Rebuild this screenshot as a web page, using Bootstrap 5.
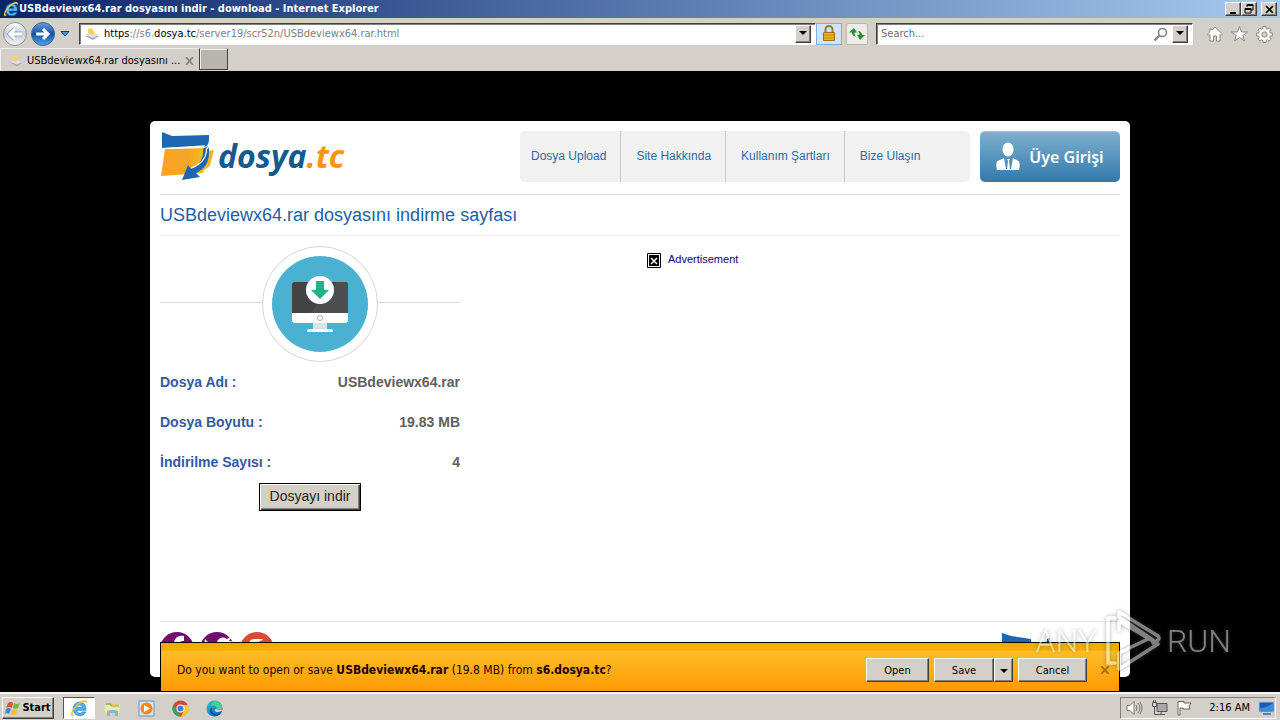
<!DOCTYPE html>
<html lang="tr">
<head>
<meta charset="utf-8">
<meta name="viewport" content="width=device-width, initial-scale=1">
<title>USBdeviewx64.rar dosyasını indir - download</title>
<link href="https://cdn.jsdelivr.net/npm/bootstrap@5.3.0/dist/css/bootstrap.min.css" rel="stylesheet">
<style>
:root{--face:#d4d0c8;--chrome:#d4cfc9}
body{font-family:"DejaVu Sans Condensed","DejaVu Sans",sans-serif;font-size:11px;line-height:14px;color:#000;background:#000}
svg{display:block;flex:none}
a{text-decoration:none}
.titlebar{height:18px;background:linear-gradient(90deg,#0a246a,#a6caf0);color:#fff;font-weight:700;padding:0 3px}
.bevel{background:var(--face);border:1px solid;border-color:#fff #404040 #404040 #fff;box-shadow:inset -1px -1px #808080;border-radius:0;padding:0;color:#000;display:flex;align-items:center;justify-content:center}
.winbtn{width:16px;height:14px}
.toolbar-row{height:30px;padding:1px 0 0 3px;background:var(--chrome)}
.field{height:22px;background:#fff;border:1px solid;border-color:#404040 #fff #fff #404040;box-shadow:inset 1px 1px #808080}
.field input{border:0;outline:0;background:transparent;min-width:0;font-size:11px;padding:0;color:#6d6d6d}
.field input::placeholder{color:#6d6d6d;opacity:1}
.field a{color:#808080;line-height:16px}
.arrowbtn{width:16px;height:18px}
.search-field{width:317px}
.lockbtn{width:26px;height:22px;background:#cfe3fb;border:1px solid #7eaee8;padding:0}
.refresh{width:22px;height:22px;background:#eeece9;border:1px solid #bbb7b0;border-radius:2px;padding:0}
.toolbar-icons{margin:0 7px 0 14px}
.tabs-row{height:23px;background:var(--chrome)}
.page-tab{width:199px;border-top:1px solid #eee;border-left:1px solid #eee;padding-top:2px}
.newtab{width:29px;background:#bab4ae;border:1px solid #404040;border-top-color:#d4cfc9;box-shadow:inset 1px 1px #eee;height:22px}
.plain{border:0;background:none;padding:0}
.viewport-area{background:#000}
.sheet{max-width:980px;height:556px;margin-top:50px;border-radius:5px;background:#fff;font-family:"Liberation Sans",Arial,sans-serif;padding:10px 10px 0}
.sheet-head{height:64px;flex:none;border-bottom:1px solid #d9d9d9}
.brand{font:italic 700 32px/50px "Open Sans",sans-serif;color:#155a8f}
.brand span{color:#ff9410}
.menu{width:450px;height:51px;margin-right:10px;background:#f1f1f1;border-radius:5px;font-size:12px}
.menu a{color:#2a6ca8;padding:0 14px 0 15px;line-height:50px;border-right:1px solid #c9c9c9;white-space:nowrap}
.menu a:first-child{padding-left:11px}
.menu a:last-child{border:0}
.member{width:140px;height:51px;border:0;border-radius:5px;background:linear-gradient(#7db0cf,#3379ac);border-top:1px solid #94c8d8;color:#fff;font:600 16px/22px "Noto Sans",sans-serif;padding:0}
.heading{flex:none;font-size:18px;line-height:20px;height:41px;color:#205fa5;border-bottom:1px solid #eee;padding-top:10px;margin:0}
.info{width:300px}
.info table{font-size:14px;font-weight:700}
.info th{color:#2f5aa3;height:40px;padding:0}
.info td{color:#606060;text-align:right;padding:0}
.getfile{display:block;height:28px;margin:1px auto 0;border:1px solid #000;background:var(--face);box-shadow:inset 1px 1px #fff,inset -1px -1px #404040,inset -2px -2px #808080;font-size:14px;color:#222;padding:0 10px 2px}
.ad{padding:17px 0 0 187px;font-size:11px;line-height:12px}
.ad a{color:#100078;gap:7px}
.sheet-foot{flex:none;gap:6px;border-top:1px solid #e8e8e8;height:56px;padding-top:10px}
.foot-brand{margin-right:70px}
.savebar{bottom:0;left:0;right:0;margin:0 auto;max-width:960px;height:50px;border:1px solid #000;background:linear-gradient(#f0aa00 0,#f6ae05 14%,#ffbd26 18%,#ff9a05 100%);color:#200;padding:6px 10px 0 16px;font-size:12px}
.savebar .bevel{height:24px;font-size:11px;padding-top:2px}
.act-open{width:63px;margin-right:5px}
.act-save{width:60px}
.act-arrow{width:19px;margin-right:5px}
.act-cancel{width:69px;margin-right:14px}
.overlay-brand{right:49px;bottom:17px;color:#fff;opacity:.5;pointer-events:none;filter:drop-shadow(0 0 2px #555)}
.overlay-brand span{font:300 32px/36px Roboto,sans-serif}
.taskbar{height:28px;background:var(--chrome);border-top:2px solid #f4f3f1;padding:2px 4px 0 2px}
.start{width:52px;height:22px;margin-right:9px;font-weight:700}
.task-active{width:32px;height:22px;background:#fff;border:1px solid;border-color:#555 #fff #fff #555}
.tasks{gap:17px;margin-left:9px}
.tray{height:22px;width:156px;border:1px solid;border-color:#808080 #fff #fff #808080}
</style>
</head>
<body class="vh-100 d-flex flex-column overflow-hidden">
<svg width="0" height="0" class="position-absolute" aria-hidden="true">
<defs>
<linearGradient id="blueball" x2="0" y2="1"><stop stop-color="#6b9fe0"/><stop offset=".5" stop-color="#1450a8"/><stop offset="1" stop-color="#55a5ee"/></linearGradient>
<linearGradient id="greyball" x2="0" y2="1"><stop stop-color="#fff"/><stop offset=".5" stop-color="#c5cfda"/><stop offset="1" stop-color="#f6f8fa"/></linearGradient>
<linearGradient id="orange" x2="1"><stop stop-color="#ffa126"/><stop offset=".6" stop-color="#f5a623"/><stop offset="1" stop-color="#edc41f"/></linearGradient>
<linearGradient id="edgegrad" x2="1" y2="1"><stop stop-color="#36c2c0"/><stop offset=".6" stop-color="#1583d6"/><stop offset="1" stop-color="#0b4ea2"/></linearGradient>
</defs>
<symbol id="ie" viewBox="0 0 16 16"><path d="M14.200 10H6c.2 3 4 3.400 4.800 1.500H14c-1.500 4.600-11 4.800-11.200-2.400C2.800.500 15 .500 14.200 10ZM6 7.500h5.100C10.800 4.600 6.300 4.600 6 7.500Z" fill="#4db4f2" stroke="#1b77c5" stroke-width=".6" fill-rule="evenodd"/><path d="M1.500 15C-1 12.400 6 3 11.500 1.300c2.700-.8 4.200.5 3 3.200C14.400.900 8.500 3 4.500 8.400c-2.400 3.300-3 5.600-.8 5.300-.7.900-1.500 1.600-2.200 1.300Z" fill="#f7ca3d" stroke="#d2a31d" stroke-width=".2"/></symbol>
<symbol id="page" viewBox="0 0 16 14"><path d="m1 9 7-3 7 3-6 4Z" fill="#9eabb9"/><path d="m1 8 7-3 7 3-6 3Z" fill="#d9e0e8"/><path d="m4 2 4-1 3 5-4 2-3-2Z" fill="#ffd15f"/></symbol>
<symbol id="folder" viewBox="0 0 54 50"><path d="M2 1 12 5l37-1v10L2 17Z" fill="#1d67b1"/><path d="m5 18 42-1-4 25-42 3Z" fill="url(#orange)"/><path d="m47 20 7-1-4 16-10 7Z" fill="#edb921"/><path d="M49 5v16c0 12-5 17-13 21l4 4-18 3 6-15 3 4c8-4 13-11 12-19Z" fill="#1d67b1"/><path d="M3 17.500 46 16c3-1 4-6 3.500-10 1 6-.5 11-3 12 0 9-5 15-15 19" fill="none" stroke="#fff" stroke-width="1.200"/></symbol>
<symbol id="down" viewBox="0 0 8 5"><path d="M0 0h8L4 4Z"/></symbol>
</svg>

<header class="flex-shrink-0">
  <div class="titlebar d-flex align-items-center">
    <svg width="16" height="16"><use href="#ie"/></svg>
    <span class="flex-grow-1 text-nowrap">USBdeviewx64.rar dosyasını indir - download - Internet Explorer</span>
    <button class="bevel winbtn" aria-label="Minimize"><svg width="9" height="9"><path d="M1 7h6v2H1z"/></svg></button>
    <button class="bevel winbtn" aria-label="Restore"><svg width="10" height="10" fill="none" stroke="#000"><path d="M3 3V.500h6V6H7M3 1.500h6M1 4.500h6V9H1ZM1 5.500h6"/></svg></button>
    <button class="bevel winbtn ms-1" aria-label="Close"><svg width="9" height="9" stroke="#000" stroke-width="1.700"><path d="m1 1 7 7M8 1 1 8"/></svg></button>
  </div>
  <div class="toolbar-row d-flex align-items-center">
    <button class="plain" aria-label="Back"><svg width="24" height="26"><circle cx="12" cy="13" r="11.500" fill="url(#greyball)" stroke="#8b9199"/><path d="M19 13H7m5-5-5 5 5 5" fill="none" stroke="#9aabc0" stroke-width="5"/><path d="M19 13H7m5-5-5 5 5 5" fill="none" stroke="#fff" stroke-width="3"/></svg></button>
    <button class="plain ms-1" aria-label="Forward"><svg width="24" height="26"><circle cx="12" cy="13" r="11.500" fill="url(#blueball)" stroke="#47688f"/><path d="M5 13h12m-5-5 5 5-5 5" fill="none" stroke="#fff" stroke-width="3"/></svg></button>
    <button class="plain px-1" aria-label="Recent pages"><svg width="12" height="8"><path d="M2 1.500h8L6 6Z" fill="#4e93d5" stroke="#123f79"/></svg></button>
    <div class="field flex-grow-1 d-flex align-items-center ms-1">
      <svg width="16" height="14" class="ms-1"><use href="#page"/></svg>
      <a href="#" class="flex-grow-1 text-nowrap overflow-hidden ps-1"><span class="text-black">https</span>://s6.<span class="text-black">dosya.tc</span>/server19/scr52n/USBdeviewx64.rar.html</a>
      <button class="bevel arrowbtn me-1" aria-label="Show addresses"><svg width="8" height="5"><use href="#down"/></svg></button>
    </div>
    <button class="lockbtn d-flex align-items-center justify-content-center flex-shrink-0" aria-label="Security report"><svg width="14" height="17"><path d="M3.500 8V4.500a3.500 3.500 0 0 1 7 0V8" fill="none" stroke="#9a7b2c" stroke-width="2"/><path d="M1.500 7.500h11v8h-11Z" fill="#f2b322" stroke="#a27316"/><path d="M2 10h10M2 13h10" stroke="#c7850f"/></svg></button>
    <button class="refresh ms-1 d-flex align-items-center justify-content-center flex-shrink-0" aria-label="Refresh"><svg width="16" height="14" fill="#299032"><path d="M5 1 0 5.500h3c.2 3 2 4 4 4C5.600 8 5.500 7 5.600 5.500H8ZM11 13l5-5h-3c-.200-3-2-4-4-4 1.400 1.500 1.500 2.500 1.400 4H8Z"/></svg></button>
    <div class="field search-field d-flex align-items-center ms-2 ps-1 pe-1 flex-shrink-0">
      <input class="flex-grow-1" type="text" placeholder="Search..." aria-label="Search">
      <svg width="14" height="14" class="me-1" fill="none" stroke="#858585"><circle cx="8.500" cy="5.500" r="4" stroke-width="1.600"/><path d="m5.500 8.500-5 5" stroke-width="2.300"/></svg>
      <button class="bevel arrowbtn" aria-label="Search options"><svg width="8" height="5"><use href="#down"/></svg></button>
    </div>
    <div class="toolbar-icons d-flex gap-2 flex-shrink-0">
      <button class="plain" aria-label="Home"><svg width="16" height="18"><path d="m8 2 7.500 7-1.500 1.500-1-1V16h-3.500v-5h-3v5H3V9.500l-1 1L.500 9 3 6.700V4h2v1Z" fill="#fff" stroke="#8a8580"/></svg></button>
      <button class="plain" aria-label="Favorites"><svg width="17" height="18"><path d="m8.500 1.500 2 5.500h6l-4.700 3.500 1.700 5.500-5-3.500-5 3.500 1.700-5.500L.500 7h6Z" fill="#fff" stroke="#8a8580"/></svg></button>
      <button class="plain" aria-label="Tools"><svg width="17" height="18"><path d="M7 1.500h3v2l1.500.7L13 2.800l2.200 2.200-1.500 1.500.600 1.500h2v3h-2l-.600 1.500 1.500 1.500-2.200 2.200-1.500-1.400-1.500.700v2H7v-2l-1.500-.700L4 16.200 1.800 14l1.500-1.500L2.700 11h-2V8h2l.600-1.500L1.800 5 4 2.800l1.500 1.400L7 3.500Z" fill="#fff" stroke="#8a8580"/><circle cx="8.500" cy="9.500" r="2.700" fill="#d4cfc9" stroke="#8a8580"/></svg></button>
    </div>
  </div>
  <div class="tabs-row d-flex">
    <div class="page-tab d-flex align-items-center ps-2">
      <svg width="14" height="14" class="me-1"><use href="#page"/></svg>
      <span class="text-nowrap flex-grow-1">USBdeviewx64.rar dosyasını ...</span>
      <button class="plain me-1" aria-label="Close tab"><svg width="10" height="8" stroke="#88827d" stroke-width="1.800"><path d="m1 0 7 8M8 0 1 8"/></svg></button>
    </div>
    <button class="newtab" aria-label="New tab"></button>
  </div>
</header>

<main class="viewport-area flex-grow-1 position-relative overflow-hidden">
  <div class="sheet mx-auto d-flex flex-column">
    <div class="sheet-head d-flex align-items-start">
      <a href="#" class="d-flex me-auto" aria-label="dosya.tc"><svg width="54" height="50" class="me-1"><use href="#folder"/></svg><span class="brand">dosya<span>.tc</span></span></a>
      <nav class="menu d-flex"><a href="#">Dosya Upload</a><a href="#">Site Hakkında</a><a href="#">Kullanım Şartları</a><a href="#">Bize Ulaşın</a></nav>
      <button class="member d-flex align-items-center justify-content-center gap-2"><svg width="25" height="30" fill="#fff"><ellipse cx="12" cy="7.500" rx="5.500" ry="7"/><path d="M8 16 1.500 19C0 20 0 25 1 28h22c1-3 1-8-.500-9L17 16l-2 11h-1l-1-8 1-2h-3l1 2-1 8h-1Z"/></svg>Üye Girişi</button>
    </div>
    <h1 class="heading">USBdeviewx64.rar dosyasını indirme sayfası</h1>
    <div class="d-flex flex-grow-1">
      <section class="info">
        <svg width="300" height="126"><path d="M0 66.500h300" stroke="#d8d8d8"/><circle cx="160" cy="68" r="57.500" fill="#fff" stroke="#d9d4dc"/><circle cx="160" cy="68" r="48" fill="#4bb1d2"/><path d="M135 46h50q3 0 3 3v28h-56V49q0-3 3-3Z" fill="#434245"/><path d="M185 46q3 0 3 3v28h-38l27-31Z" fill="#4e4d50"/><path d="M132 77h56v7q0 3-3 3h-50q-3 0-3-3Z" fill="#fff"/><path d="M153 87h14v7h-14Z" fill="#d8e3e7"/><path d="M149 93h22q2 0 2 3h-26q0-3 2-3Z" fill="#f7fbfd"/><circle cx="160" cy="82" r="2.500" fill="#fff" stroke="#b7a9ac"/><circle cx="160" cy="54" r="14" fill="#fff"/><path d="M156 45h8v9h5l-9 9-9-9h5Z" fill="#2aae8a"/></svg>
        <table class="w-100"><tbody>
          <tr><th scope="row">Dosya Adı :</th><td>USBdeviewx64.rar</td></tr>
          <tr><th scope="row">Dosya Boyutu :</th><td>19.83 MB</td></tr>
          <tr><th scope="row">İndirilme Sayısı :</th><td>4</td></tr>
        </tbody></table>
        <button class="getfile">Dosyayı indir</button>
      </section>
      <aside class="ad"><a href="#" class="d-flex"><svg width="14" height="15"><path fill="#fff" stroke="#000" d="M.500.500h13v14H.500z"/><path d="M2 2h10v11H2z"/><path d="m4 5 6 6m0-6-6 6" stroke="#fff" stroke-width="1.500"/></svg>Advertisement</a></aside>
    </div>
    <footer class="sheet-foot d-flex">
      <a href="#" aria-label="Facebook"><svg width="34" height="34"><circle cx="17" cy="17" r="17" fill="#750c70"/><path d="M24 4c-6-1-10 2-10 8v4h-3v5h3v12h5V21h5v-5h-5v-3c0-3 1-4 5-4Z" fill="#fff"/></svg></a>
      <a href="#" aria-label="Twitter"><svg width="34" height="34"><circle cx="17" cy="17" r="17" fill="#750c70"/><path d="M5 7c4 5 8 6 12 6-1-6 5-10 10-6l4-2-2 4 3 0-4 4c0 14-14 18-22 13 4 0 6-1 8-3-4 0-5-3-5-5-4-2-5-6-4-11Z" fill="#fff"/></svg></a>
      <a href="#" aria-label="Google Plus"><svg width="34" height="34"><circle cx="17" cy="17" r="17" fill="#dc4937"/><path d="M23 7H14C8 7 6 17 14 18l1 2c-12 0-12 9-3 9 10 0 12-8 5-12l3-4-1-4h2Z" fill="#fff"/></svg></a>
      <a href="#" class="ms-auto foot-brand" aria-label="dosya.tc"><svg width="54" height="34"><path d="m6 1 9 3 20 3v8H6Z" fill="#1d67b1"/><path d="m51 7 3-1-2 14h-3Z" fill="#155a8f"/><path d="M8 17h26l-3 15H5Z" fill="url(#orange)"/></svg></a>
    </footer>
  </div>
  <div class="savebar position-absolute d-flex align-items-center" role="alert">
    <span class="me-auto">Do you want to open or save <b>USBdeviewx64.rar</b> (19.8 MB) from <b>s6.dosya.tc</b>?</span>
    <button class="bevel act-open">Open</button>
    <button class="bevel act-save">Save</button><button class="bevel act-arrow" aria-label="Save options"><svg width="8" height="5"><use href="#down"/></svg></button>
    <button class="bevel act-cancel">Cancel</button>
    <button class="plain" aria-label="Dismiss"><svg width="8" height="8" stroke="#a96a16" stroke-width="1.800"><path d="m0 0 8 8m0-8L0 8"/></svg></button>
  </div>
  <div class="overlay-brand position-absolute d-flex align-items-center" aria-hidden="true"><span>ANY</span><svg class="ms-2 me-1" width="58" height="68" viewBox="0 0 58 68" fill="none" stroke="#fff" stroke-width="3.500" stroke-linejoin="round" stroke-linecap="round"><path d="M10 11H3v45h7"/><path d="M48 33 14 10V5l39 24q2 2 0 4L48 36"/><path d="M14 23v-9l39 23L14 62V46l29-14"/></svg><span>RUN</span></div>
</main>

<footer class="taskbar d-flex align-items-center flex-shrink-0">
  <button class="bevel start"><svg width="17" height="16"><path d="M3 3q3-2 5 0L7 8Q4 6 1 8Z" fill="#e2562c"/><path d="M9 3q3 2 6 0l-2 5q-3 2-5 0Z" fill="#74b846"/><path d="M1 9q3-2 5 0l-2 5q-2-2-4 0Z" fill="#3c87d2"/><path d="M7 9q3 2 6 0l-2 5q-3 2-5 0Z" fill="#f4c02c"/></svg>Start</button>
  <button class="task-active p-0 d-flex align-items-center justify-content-center" aria-label="Internet Explorer"><svg width="18" height="18"><use href="#ie"/></svg></button>
  <div class="d-flex align-items-center tasks">
    <button class="plain" aria-label="Explorer"><svg width="17" height="17"><path d="M2 3h5l1 1h7v9H2Z" fill="#eacb6d"/><path d="M1 5h15v8H1Z" fill="#f8e6a2"/><path d="M2 4h5v2h8" fill="none" stroke="#63a86d"/><path d="M3 16v-5q6-2 11 0v5h-3v-3H6v3Z" fill="#78b9e4"/></svg></button>
    <button class="plain" aria-label="Media Player"><svg width="17" height="17"><path d="M1 1h15v15H1Z" fill="#d4e5f6" stroke="#6796c9"/><circle cx="8.500" cy="8.500" r="6" fill="#f58915"/><path d="m6 5 6 3.500L6 12Z" fill="#fff"/></svg></button>
    <button class="plain" aria-label="Chrome"><svg width="17" height="17"><circle cx="8.500" cy="8.500" r="8" fill="#df4334"/><path d="M1.500 4.500 6 12l3 4.500A8 8 0 0 1 1.500 4.500" fill="#36a557"/><path d="M9 5h7a8 8 0 0 1-7 11.500l3-6Z" fill="#f9c928"/><circle cx="8.500" cy="8.500" r="4" fill="#fff"/><circle cx="8.500" cy="8.500" r="3" fill="#397fe0"/></svg></button>
    <button class="plain" aria-label="Edge"><svg width="17" height="17"><circle cx="8.500" cy="8.500" r="8" fill="url(#edgegrad)"/><path d="M8 1c6-1 9 5 8 8-1 2-5 2-6 1 2-3-1-5-5-4 0-2 1-4 3-5Z" fill="#48cf98"/><path d="M6 8c-1 6 5 8 9 5-4 5-11 2-11-2 0-2 1-3 2-3Z" fill="#104f9c"/><path d="M9 9q-1 5 7 2l1-1-4 0Z" fill="#d4cfc9"/></svg></button>
  </div>
  <div class="tray ms-auto d-flex align-items-center ps-1 gap-2">
    <svg width="18" height="16" fill="none" stroke="#77736f"><path d="M2 5.500h3l4-4v13l-4-4H2Z" fill="#fff"/><path d="M11 5q2 3 0 6m2-8q4 5 0 10m2-11q4 6 0 12"/></svg>
    <svg width="17" height="16" fill="none" stroke="#555"><path d="M6 3.500h10v8H6Z" fill="#a8a8a8"/><path d="M6 14.500h8m-4-3v3M1.500 2.500h4v4h-4Zm2 4v8h3M2.500 0v2m2-2v2"/></svg>
    <svg width="17" height="16" stroke="#666" fill="#fff"><path d="M2 15V1.500h6V3h7l-2 3 1 3H7V8H4v7Z"/></svg>
    <span class="ms-auto text-nowrap">2:16 AM</span>
    <svg width="17" height="15"><path d="M1 1h15v10H1Z" fill="#1759b9" stroke="#a8c4df"/><path d="M2 7q7 0 13-5v8H2Z" fill="#3b8ce0"/><path d="M5 13h8" stroke="#5a82af" stroke-width="2"/></svg>
  </div>
</footer>
<script src="https://cdn.jsdelivr.net/npm/bootstrap@5.3.0/dist/js/bootstrap.bundle.min.js"></script>
</body>
</html>
